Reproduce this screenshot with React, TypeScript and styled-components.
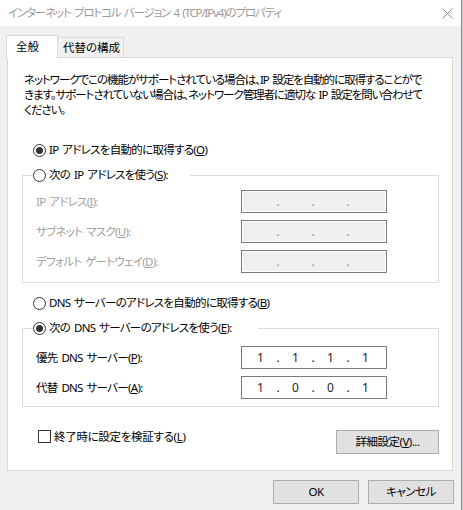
import React from "react";
import styled, { createGlobalStyle } from "styled-components";

const GlobalStyle = createGlobalStyle`
  html, body {
    margin: 0;
    padding: 0;
    background: #c9ced6;
  }
  body {
    font-family: "Noto Sans", "Noto Sans CJK JP", sans-serif;
    font-size: 11.5px;
    color: #000;
    font-feature-settings: "palt";
    letter-spacing: -0.7px;
    word-spacing: 1.5px;
  }
`;

const Window = styled.div`
  width: 462px;
  height: 510px;
  box-sizing: border-box;
  border-right: 1px solid #8c8c8c;
  background: #f0f0f0;
  display: flex;
  flex-direction: column;
  overflow: hidden;
`;

const TitleBar = styled.div`
  height: 26px;
  flex: none;
  background: #fff;
  display: flex;
  align-items: center;
  justify-content: space-between;
  padding: 0 8px 0 8px;
  color: #9a9a9a;
  line-height: 14px;
  letter-spacing: -1.15px;
`;

const TabStrip = styled.div`
  display: flex;
  align-items: flex-end;
  height: 22px;
  margin-top: 9px;
  padding-left: 6px;
`;

const Tab = styled.div<{ $active?: boolean }>`
  box-sizing: border-box;
  height: ${(p) => (p.$active ? "23px" : "20px")};
  margin-bottom: ${(p) => (p.$active ? "-1px" : "0")};
  margin-left: ${(p) => (p.$active ? "0" : "-1px")};
  width: ${(p) => (p.$active ? "52px" : "67px")};
  padding-left: ${(p) => (p.$active ? "9px" : "5px")};
  background: ${(p) => (p.$active ? "#fff" : "#f0f0f0")};
  border: 1px solid #d9d9d9;
  border-bottom: none;
  position: relative;
  z-index: ${(p) => (p.$active ? 1 : 0)};
  display: flex;
  align-items: center;
  line-height: 14px;
  letter-spacing: 0;
`;

const Panel = styled.div`
  margin: 0 8px 0 7px;
  border: 1px solid #d9d9d9;
  background: #fff;
  padding: 14px 13px 16px 14px;
  display: flex;
  flex-direction: column;
`;

const Intro = styled.p`
  margin: 0 0 0 2px;
  line-height: 15px;
  letter-spacing: -1.05px;
  white-space: nowrap;
`;

const RadioRow = styled.label<{ $gap?: number }>`
  display: flex;
  align-items: center;
  height: 20px;
  margin-top: ${(p) => p.$gap ?? 0}px;
  padding-left: 11px;
  gap: 3px;
  line-height: 14px;
  white-space: nowrap;
`;

const Radio = styled.span<{ $checked?: boolean }>`
  box-sizing: border-box;
  flex: none;
  width: 13px;
  height: 13px;
  border: 1px solid #333;
  border-radius: 50%;
  background: #fff;
  display: flex;
  align-items: center;
  justify-content: center;
  &::after {
    content: "";
    display: ${(p) => (p.$checked ? "block" : "none")};
    width: 7px;
    height: 7px;
    border-radius: 50%;
    background: #333;
  }
`;

const Group = styled.fieldset<{ $top: number; $bottom: number }>`
  margin: 5px 0 0;
  border: 1px solid #dcdcdc;
  padding: ${(p) => p.$top}px 13px ${(p) => p.$bottom}px;
  display: flex;
  flex-direction: column;
  gap: 7px;
  min-width: 0;
`;

const Legend = styled.legend<{ $width: number }>`
  box-sizing: border-box;
  width: ${(p) => p.$width}px;
  padding: 0;
  margin-left: -3px;
  background: #fff;
`;

const LegendRow = styled.span`
  display: flex;
  align-items: center;
  height: 20px;
  gap: 3px;
  line-height: 14px;
  white-space: nowrap;
`;

const FieldRow = styled.div<{ $disabled?: boolean }>`
  display: flex;
  align-items: center;
  height: 23px;
  color: ${(p) => (p.$disabled ? "#a0a0a0" : "#000")};
  line-height: 14px;
`;

const FieldLabel = styled.span`
  width: 205px;
  flex: none;
  white-space: nowrap;
`;

const IpBox = styled.div<{ $disabled?: boolean }>`
  box-sizing: border-box;
  width: 146px;
  height: 23px;
  border: 1px solid #7a7a7a;
  background: ${(p) => (p.$disabled ? "#f0f0f0" : "#fff")};
  box-shadow: ${(p) => (p.$disabled ? "inset 0 0 0 1px #fff" : "none")};
  display: flex;
  align-items: center;
  padding-left: 3px;
  color: ${(p) => (p.$disabled ? "#8a8a8a" : "#222")};
  font-size: 12px;
  letter-spacing: 0;
  line-height: 14px;
`;

const Octet = styled.span`
  width: 31px;
  text-align: center;
`;

const Dot = styled.span`
  width: 4px;
  text-align: center;
`;

const FooterRow = styled.div`
  display: flex;
  justify-content: space-between;
  align-items: flex-start;
  margin-top: 23px;
  padding-left: 16px;
`;

const CheckLabel = styled.label`
  display: flex;
  align-items: center;
  gap: 3px;
  height: 13px;
  line-height: 13px;
  letter-spacing: -0.3px;
  white-space: nowrap;
`;

const CheckBox = styled.span`
  box-sizing: border-box;
  flex: none;
  width: 13px;
  height: 13px;
  border: 1px solid #333;
  background: #fff;
`;

const Button = styled.button<{ $width: number }>`
  box-sizing: border-box;
  width: ${(p) => p.$width}px;
  height: 24px;
  background: #e1e1e1;
  border: 1px solid #adadad;
  border-radius: 0;
  padding: 0;
  font: inherit;
  letter-spacing: -0.5px;
  line-height: 14px;
  color: #000;
`;

const ButtonBar = styled.div`
  display: flex;
  justify-content: flex-end;
  gap: 9px;
  margin-top: 9px;
  padding-right: 7px;
`;

const CloseIcon = () => (
  <svg width="11" height="11" viewBox="0 0 11 11">
    <path d="M0.5 0.5 L10.5 10.5 M10.5 0.5 L0.5 10.5" stroke="#8a8a8a" strokeWidth="1" />
  </svg>
);

const IpValue = ({ parts, disabled }: { parts: string[]; disabled?: boolean }) => (
  <IpBox $disabled={disabled}>
    {parts.map((part, i) => (
      <React.Fragment key={i}>
        {i > 0 && <Dot>.</Dot>}
        <Octet>{part}</Octet>
      </React.Fragment>
    ))}
  </IpBox>
);

const empty = ["", "", "", ""];

export default function App() {
  return (
    <>
      <GlobalStyle />
      <Window>
        <TitleBar>
          <span>インターネット プロトコル バージョン 4 (TCP/IPv4)のプロパティ</span>
          <CloseIcon />
        </TitleBar>

        <TabStrip>
          <Tab $active>全般</Tab>
          <Tab>代替の構成</Tab>
        </TabStrip>

        <Panel>
          <Intro>
            ネットワークでこの機能がサポートされている場合は、IP 設定を自動的に取得することがで
            <br />
            きます。サポートされていない場合は、ネットワーク管理者に適切な IP 設定を問い合わせて
            <br />
            ください。
          </Intro>

          <RadioRow $gap={23}>
            <Radio $checked />
            <span>
              IP アドレスを自動的に取得する(<u>O</u>)
            </span>
          </RadioRow>

          <Group $top={5} $bottom={9}>
            <Legend $width={157}>
              <LegendRow>
                <Radio />
                <span>
                  次の IP アドレスを使う(<u>S</u>):
                </span>
              </LegendRow>
            </Legend>
            <FieldRow $disabled>
              <FieldLabel>
                IP アドレス(<u>I</u>):
              </FieldLabel>
              <IpValue parts={empty} disabled />
            </FieldRow>
            <FieldRow $disabled>
              <FieldLabel>
                サブネット マスク(<u>U</u>):
              </FieldLabel>
              <IpValue parts={empty} disabled />
            </FieldRow>
            <FieldRow $disabled>
              <FieldLabel>
                デフォルト ゲートウェイ(<u>D</u>):
              </FieldLabel>
              <IpValue parts={empty} disabled />
            </FieldRow>
          </Group>

          <RadioRow $gap={10}>
            <Radio />
            <span>
              DNS サーバーのアドレスを自動的に取得する(<u>B</u>)
            </span>
          </RadioRow>

          <Group $top={8} $bottom={7}>
            <Legend $width={225}>
              <LegendRow>
                <Radio $checked />
                <span>
                  次の DNS サーバーのアドレスを使う(<u>E</u>):
                </span>
              </LegendRow>
            </Legend>
            <FieldRow>
              <FieldLabel>
                優先 DNS サーバー(<u>P</u>):
              </FieldLabel>
              <IpValue parts={["1", "1", "1", "1"]} />
            </FieldRow>
            <FieldRow>
              <FieldLabel>
                代替 DNS サーバー(<u>A</u>):
              </FieldLabel>
              <IpValue parts={["1", "0", "0", "1"]} />
            </FieldRow>
          </Group>

          <FooterRow>
            <CheckLabel>
              <CheckBox />
              <span>
                終了時に設定を検証する(<u>L</u>)
              </span>
            </CheckLabel>
            <Button $width={103}>
              詳細設定(<u>V</u>)...
            </Button>
          </FooterRow>
        </Panel>

        <ButtonBar>
          <Button $width={86}>OK</Button>
          <Button $width={86}>キャンセル</Button>
        </ButtonBar>
      </Window>
    </>
  );
}
